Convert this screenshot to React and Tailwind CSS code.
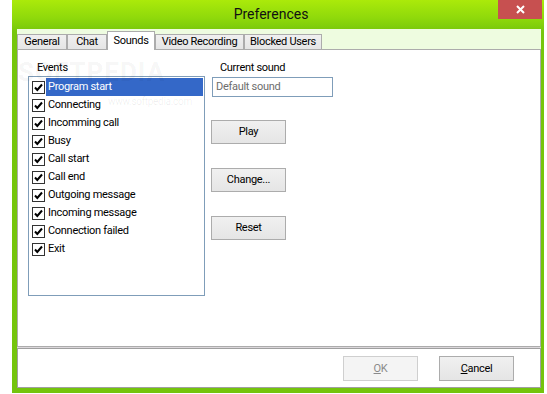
const events = [
  "Program start",
  "Connecting",
  "Incomming call",
  "Busy",
  "Call start",
  "Call end",
  "Outgoing message",
  "Incoming message",
  "Connection failed",
  "Exit",
];

const tabs = [
  { label: "General", w: "w-[50px]" },
  { label: "Chat", w: "w-[40px]" },
  { label: "Sounds", w: "w-[48px]", active: true },
  { label: "Video Recording", w: "w-[89px]" },
  { label: "Blocked Users", w: "w-[78px]" },
];

function Check() {
  return (
    <span className="w-[13px] h-[13px] border border-[#333] bg-white flex items-center justify-center shrink-0">
      <svg width="9" height="9" viewBox="0 0 9 9">
        <path d="M1 4.5 L3.3 7 L8 1.5" fill="none" stroke="#000" strokeWidth="2" />
      </svg>
    </span>
  );
}

function Btn({ children }) {
  return (
    <button className="w-[75px] h-[24px] pt-px border border-[#acacac] bg-[linear-gradient(180deg,#f0f0f0,#e5e5e5)] text-black flex items-center justify-center">
      {children}
    </button>
  );
}

export default function App() {
  return (
    <div className="w-[547px] h-[394px] bg-white font-['Roboto',sans-serif] text-[11px] tracking-[-0.3px] text-black">
      <div className="ml-[12px] w-[532px] h-[393px] flex flex-col bg-[linear-gradient(180deg,#abea0a_0px,#8fd90b_18px,#76c60c_32px,#74c40c_100%)]">
        {/* title bar */}
        <div className="relative h-[29px] flex items-center justify-center pr-[14px] pb-[1px]">
          <span className="text-[14px] tracking-normal text-[#111]">Preferences</span>
          <div className="absolute right-[2px] top-0 w-[44px] h-[19px] bg-[#c75050] flex items-center justify-center">
            <svg width="9" height="9" viewBox="0 0 9 9">
              <path d="M1 1 L8 8 M8 1 L1 8" stroke="#fff" strokeWidth="2" />
            </svg>
          </div>
        </div>

        {/* client */}
        <div className="flex-1 ml-[5px] mr-[3px] mb-[5px] bg-[#eefce0] flex flex-col pt-[2px]">
          <div className="h-[18px] flex items-end">
            {tabs.map((t) =>
              t.active ? (
                <div
                  key={t.label}
                  className={`${t.w} h-[19px] -mb-px relative z-10 bg-white border border-b-0 border-[#acacac] flex items-center justify-center`}
                >
                  {t.label}
                </div>
              ) : (
                <div
                  key={t.label}
                  className={`${t.w} h-[15px] pt-px border border-b-0 border-[#acacac] bg-[linear-gradient(180deg,#f0f0f0,#e5e5e5)] flex items-center justify-center`}
                >
                  {t.label}
                </div>
              )
            )}
          </div>

          {/* tab panel */}
          <div className="relative flex-1 bg-white border border-[#acacac] flex pl-[10px] pt-[10px]">
            <div className="absolute left-[0px] top-[3px] text-[26px] font-bold tracking-[1px] text-black/[0.05] pointer-events-none">
              SOFTPEDIA
            </div>
            <div className="absolute left-[90px] top-[44px] text-[10px] text-black/[0.07] pointer-events-none">
              www.softpedia.com
            </div>

            <div className="flex flex-col">
              <div className="h-[16px] leading-[16px] pl-[9px]">Events</div>
              <div className="w-[177px] h-[220px] border border-[#7f9db9] p-px">
                {events.map((e, i) => (
                  <div key={e} className="h-[18px] flex items-center">
                    <div className="w-[16px] pl-[2px]">
                      <Check />
                    </div>
                    <div
                      className={`flex-1 h-full flex items-center pl-[2px] pt-px ${
                        i === 0 ? "bg-[#3468c8] text-white" : ""
                      }`}
                    >
                      {e}
                    </div>
                  </div>
                ))}
              </div>
            </div>

            <div className="flex flex-col ml-[6px]">
              <div className="h-[16px] leading-[16px] pl-[9px]">Current sound</div>
              <div className="ml-px mt-px w-[121px] h-[20px] border border-[#7f9db9] flex items-center pl-[3px] text-[#6d6d6d]">
                Default sound
              </div>
              <div className="mt-[23px] flex flex-col gap-[24px]">
                <Btn>Play</Btn>
                <Btn>Change...</Btn>
                <Btn>Reset</Btn>
              </div>
            </div>
          </div>

          <div className="h-px bg-[#dcd8dc]" />

          {/* bottom panel */}
          <div className="h-[40px] bg-white border border-[#a0a0a0] flex justify-end items-start pt-[7px] pr-[26px] gap-[21px]">
            <button className="w-[75px] h-[25px] pt-px border border-[#cfcfcf] bg-[#f4f4f4] text-[#8a8a8a] flex items-center justify-center">
              <span>
                <u>O</u>K
              </span>
            </button>
            <button className="w-[75px] h-[25px] pt-px border border-[#acacac] bg-[linear-gradient(180deg,#f0f0f0,#e5e5e5)] flex items-center justify-center">
              <span>
                <u>C</u>ancel
              </span>
            </button>
          </div>
        </div>
      </div>
    </div>
  );
}
